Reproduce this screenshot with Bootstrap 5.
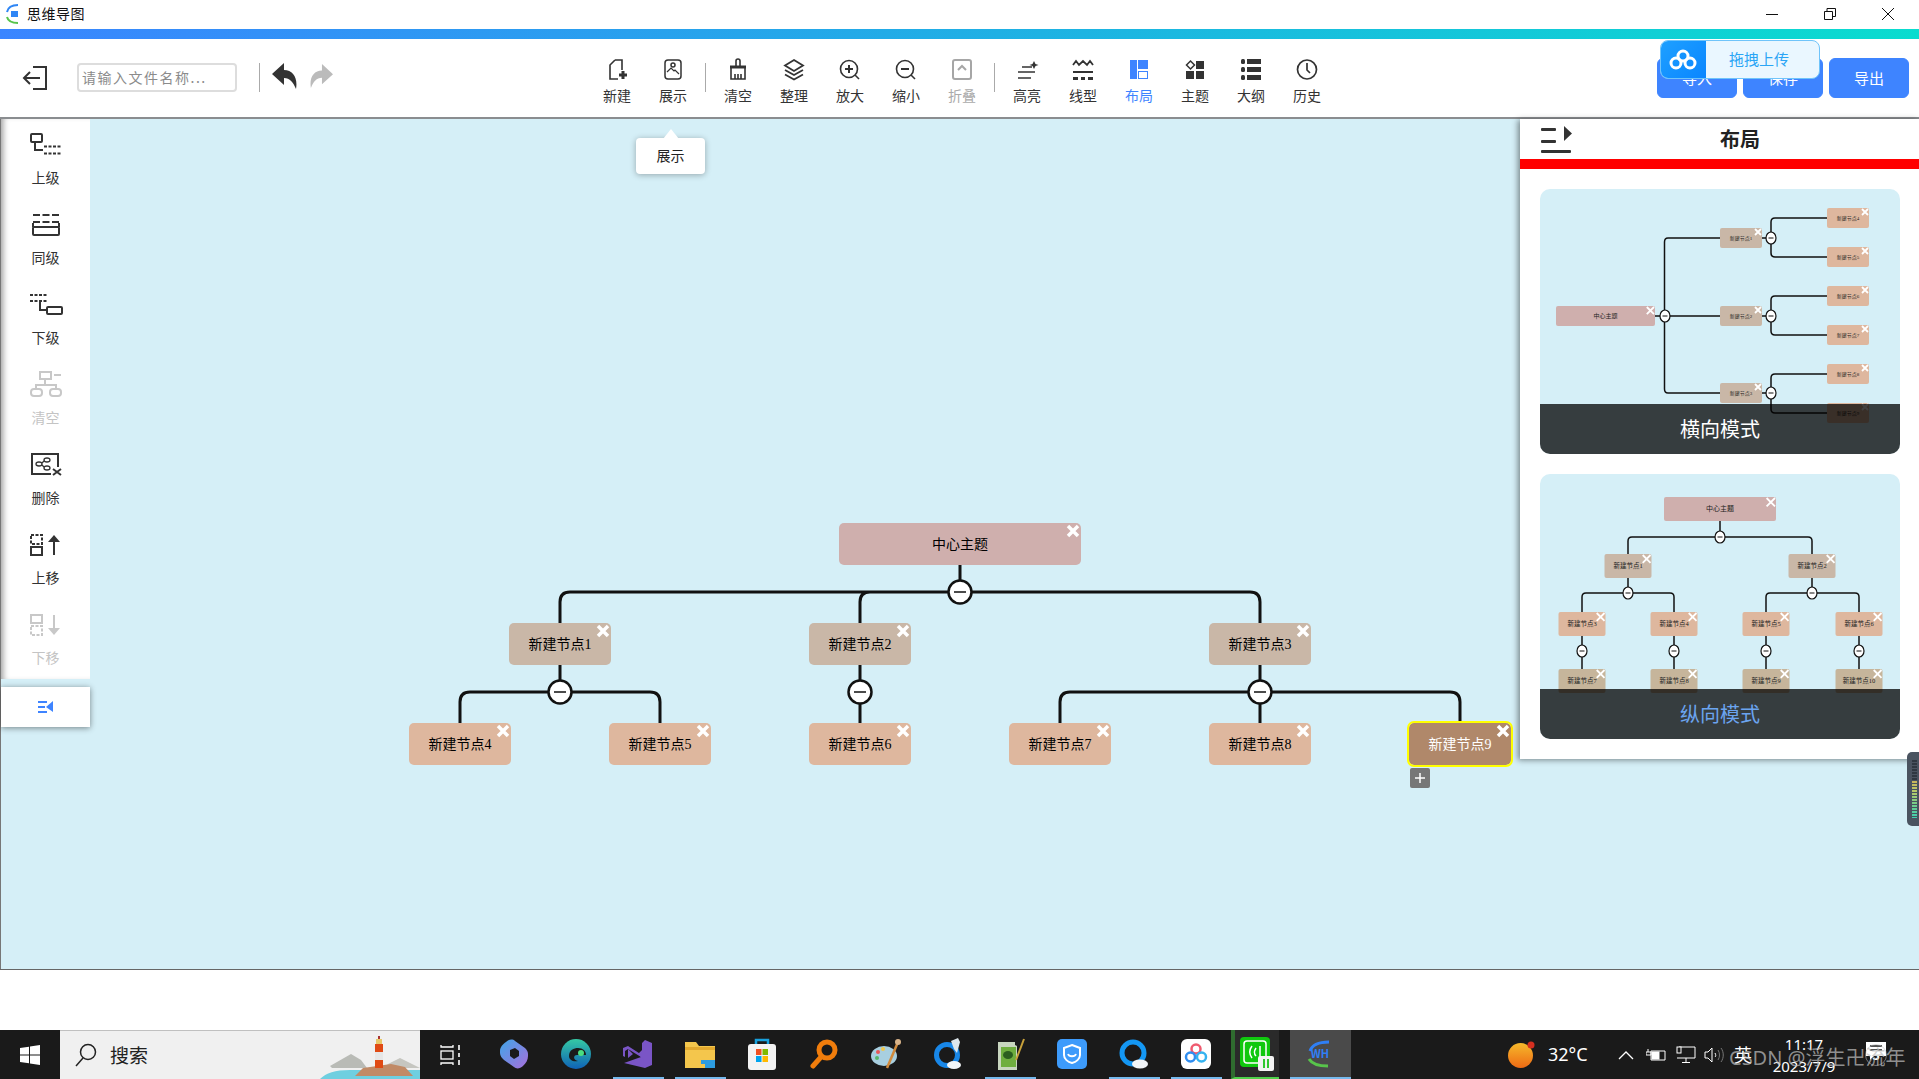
<!DOCTYPE html>
<html lang="zh">
<head>
    <meta charset="UTF-8">
    <meta name="viewport" content="width=device-width, initial-scale=1.0">
    <title>思维导图</title>
    <link href="https://cdn.jsdelivr.net/npm/bootstrap@5.3.0/dist/css/bootstrap.min.css" rel="stylesheet">
    <style>
        html, body { height: 100%; overflow: hidden; }
        body { background: #fff; font-family: "Noto Sans CJK SC", "Noto Sans", sans-serif; color: #333; font-size: 14px; }
        .app-shell { width: 1919px; height: 1079px; }

        /* window title */
        .win-title { height: 29px; padding-bottom: 2px; }
        .win-title .app-name { font-size: 14px; color: #111; margin-left: 3px; letter-spacing: .5px; }
        .win-btn { width: 58px; height: 27px; }
        .win-ctrls { padding-right: 2px; }
        .grad-bar { height: 10px; background: linear-gradient(90deg, #3a85ff, #1fb0e4 52%, #0adccf); }

        /* toolbar */
        .tool-bar { height: 80px; border-bottom: 2px solid #8a8d90; position: relative; }
        .exit-ico { margin: 27px 0 0 22px; }
        .name-input { width: 160px; height: 29px; margin: 24px 0 0 30px; border: 2px solid #ddd; border-radius: 4px; padding: 0 3px 2px; font-size: 14px; letter-spacing: 1.500px; outline: 0; }
        .name-input::placeholder { color: #8b8b8b; }
        .bar-sep { width: 1px; height: 29px; background: #aaa; margin-top: 24px; }
        .sep-a { margin-left: 22px; margin-right: 12px; }
        .sep-b { margin-left: 4px; margin-right: 4px; }
        .undo-ico { margin-top: 24px; }
        .redo-ico { margin: 24px 0 0 13px; }
        .tools-start { margin-left: 256px; }
        .tool-item { width: 56px; padding-top: 18px; color: #333; }
        .tool-item svg { display: block; }
        .tool-item span { line-height: 20px; margin-top: 4px; }
        .tool-off { color: #aaa; }
        .tool-on { color: #3e84ff; }
        .act-btns { margin: 19px 10px 0 auto; gap: 6px; }
        .act-btn { width: 80px; height: 40px; padding: 0; background: #3e84ff; border-color: #3e84ff; border-radius: 6px; font-size: 15px; color: #fff; }
        .drop-float { position: absolute; top: 1px; left: 1660px; width: 160px; height: 39px; border: 1px solid #6fc4fa; border-radius: 8px; overflow: hidden; background: #eaf7ff; }
        .drop-logo { width: 45px; background: linear-gradient(135deg, #1ea0ff, #0a86ff); padding-right: 2px; }
        .drop-text { color: #2aa5f5; font-size: 15px; padding-right: 7px; }
        .tip-box { position: absolute; left: 636px; top: 19px; width: 69px; height: 36px; background: #fff; border-radius: 4px; box-shadow: 0 1px 6px rgba(0,0,0,.3); z-index: 5; font-size: 14px; color: #222; padding-bottom: 2px; }
        .tip-box::before { content: ""; position: absolute; left: 27px; top: -9px; border: 8px solid transparent; border-top: 0; border-bottom: 10px solid #fff; }

        /* stage */
        .stage { height: 851px; position: relative; background: #d5eff7; border-bottom: 1px solid #666; }
        .left-col { width: 90px; position: relative; z-index: 3; border-left: 1px solid #777; }
        .left-pane { height: 560px; background: #fff; box-shadow: inset 6px 0 6px -4px #999; }
        .side-item { height: 80px; padding-top: 10px; color: #333; }
        .side-item svg { display: block; }
        .side-item span { line-height: 20px; margin-top: 8px; }
        .side-off { color: #c4c4c4; }
        .side-toggle { height: 40px; margin-top: 8px; background: #fff; box-shadow: 0 1px 6px rgba(0,0,0,.45); }
        .map-lines { position: absolute; left: 90px; top: 0; width: 1829px; height: 851px; }
        .map-node { position: absolute; width: 102px; height: 42px; border-radius: 5px; color: #000; font-size: 14px; font-family: "Liberation Serif", "Noto Sans CJK SC", serif; }
        .map-node.root { width: 242px; background: #cfafad; }
        .map-node.lv1 { background: #c9b7a7; }
        .map-node.lv2 { background: #deb79e; }
        .map-node.sel { background: #b0886a; color: #fff; outline: 2px solid #ff0; outline-offset: 0; }
        .node-x { position: absolute; right: 1px; top: 1px; }
        .add-btn { position: absolute; left: 1410px; top: 649px; width: 20px; height: 20px; background: #777; border-radius: 2px; }

        /* right panel */
        .right-pane { position: absolute; right: 0; top: 0; width: 399px; height: 640px; background: #fff; box-shadow: -2px 1px 6px rgba(0,0,0,.45); z-index: 4; }
        .pane-head { height: 40px; padding-left: 21px; }
        .pane-title { font-size: 20px; font-weight: 700; color: #222; padding-right: 11px; }
        .red-bar { height: 10px; background: #f00; }
        .mode-list { padding: 20px 19px 0 20px; gap: 20px; }
        .mode-card { height: 265px; border-radius: 10px; overflow: hidden; background: #d5eff7; position: relative; }
        .mode-card svg { display: block; font-family: "Liberation Serif", "Noto Sans CJK SC", serif; }
        .mode-cap { position: absolute; left: 0; right: 0; bottom: 0; height: 50px; background: rgba(0,0,0,.745); color: #fff; font-size: 20px; }
        .mode-cap.picked { color: #6ba4ef; }
        .edge-handle { position: absolute; right: 0; top: 633px; width: 12px; height: 74px; background: #4a5360; border-radius: 5px 0 0 5px; z-index: 6; padding: 8px 2px 0 5px; }
        .edge-handle i { display: block; height: 58px; background: repeating-linear-gradient(transparent 0 2px, #4a5360 2px 3px), linear-gradient(#2f3741 0 35%, #c9b45a 36%, #b6c96a 55%, #6fce8e 78%, #3fd0b0 100%); }

        /* taskbar */
        .page-gap { height: 60px; }
        .task-bar { height: 49px; background: #1a1a1a; position: relative; color: #fff; }
        .defs-holder { position: absolute; width: 0; height: 0; }
        .start-btn { width: 60px; }
        .search-box { width: 360px; background: #f0f0f0; border-top: 1px solid #c0c0c0; color: #222; position: relative; overflow: hidden; padding-left: 15px; }
        .search-box span { font-size: 19px; margin-left: 13px; }
        .search-art { position: absolute; right: 0; bottom: 0; }
        .taskview { width: 63px; padding-left: 20px; }
        .task-slot { width: 62px; }
        .slot-in { width: 51px; height: 49px; border-bottom: 2px solid transparent; }
        .slot-in.run { border-bottom-color: #76b9ed; }
        .slot-in.grn { width: 48px; background: #2a2a2a; border-left: 4px solid #2f6b2f; border-bottom-color: #4fd04a; margin-left: -6px; }
        .slot-in.cur { width: 61px; background: #4a4a4a; border-bottom-color: #76b9ed; }
        .tray-sun { margin-left: 157px; }
        .tray-temp { font-family: "Noto Sans", sans-serif; font-size: 18px; margin-left: 13px; width: 39px; white-space: nowrap; }
        .tray-a { margin-left: 31px; }
        .tray-b { margin-left: 12px; }
        .tray-c { margin-left: 10px; }
        .tray-d { margin-left: 8px; }
        .tray-lang { margin-left: 10px; width: 20px; font-size: 18px; }
        .tray-clock { width: 70px; margin-left: 15px; font-family: "Noto Sans", sans-serif; font-size: 15px; line-height: 22px; }
        .tray-note { margin-left: 27px; position: relative; padding-bottom: 8px; }
        .note-num { position: absolute; left: -1px; top: 14px; width: 22px; height: 22px; border: 1px solid rgba(190,190,190,.55); border-radius: 50%; font-size: 13px; font-weight: 700; line-height: 20px; text-align: center; }
        .mark-text { position: absolute; left: 1729px; top: 15px; font-size: 20px; color: rgba(190,190,190,.72); white-space: nowrap; line-height: 26px; font-family: "Noto Sans", "Noto Sans CJK SC", sans-serif; }
    </style>
</head>
<body>
<div class="app-shell d-flex flex-column">

    <div class="win-title d-flex align-items-center">
        <svg width="20" height="22" viewBox="0 0 20 22" class="ms-1">
            <path d="M3 9C4 4 8 2 14 2" fill="none" stroke="#2f86f5" stroke-width="2"/>
            <path d="M3 14c1 4 5 6 11 6" fill="none" stroke="#58c44b" stroke-width="2"/>
            <rect x="7" y="8" width="7" height="6" fill="#2f86f5"/>
        </svg>
        <span class="app-name">思维导图</span>
        <div class="win-ctrls d-flex ms-auto">
            <div class="win-btn d-flex align-items-center justify-content-center">
                <svg width="12" height="12"><path d="M0 6.5h12" stroke="#111"/></svg>
            </div>
            <div class="win-btn d-flex align-items-center justify-content-center">
                <svg width="12" height="12"><path d="M.5 3.5h8v8h-8zM3 3V.5h8.500v8H9" fill="none" stroke="#111"/></svg>
            </div>
            <div class="win-btn d-flex align-items-center justify-content-center">
                <svg width="12" height="12"><path d="M0 0l12 12M12 0L0 12" stroke="#111"/></svg>
            </div>
        </div>
    </div>
    <div class="grad-bar"></div>

    <div class="tool-bar d-flex align-items-start">
        <svg class="exit-ico" width="25" height="24" viewBox="0 0 25 24" fill="none" stroke="#333" stroke-width="2">
            <path d="M11 1h13v22H11M18 12H2M8 6l-6 6 6 6"/>
        </svg>
        <input class="name-input" type="text" placeholder="请输入文件名称...">
        <div class="bar-sep sep-a"></div>
        <svg class="undo-ico" width="25" height="26" viewBox="0 0 25 26"><path d="M0 11L12 0v7c9 0 14 8 12 19-3-7-6-11-12-11v7z" fill="#333"/></svg>
        <svg class="redo-ico" width="23" height="26" viewBox="0 0 25 26"><path d="M25 11L13 0v7C4 7-1 15 1 26c3-7 6-11 12-11v7z" fill="#bbb"/></svg>

        <div class="tools-start d-flex align-items-start">
            <div class="tool-item d-flex flex-column align-items-center">
                <svg width="24" height="24" viewBox="0 0 24 24" fill="none" stroke="#333" stroke-width="1.600"><path d="M10 3h7v10M10 3L5 8v14h8"/><path d="M18 14v8M14 18h8" stroke-width="3"/></svg>
                <span>新建</span>
            </div>
            <div class="tool-item d-flex flex-column align-items-center">
                <svg width="24" height="24" viewBox="0 0 24 24" fill="none" stroke="#333" stroke-width="1.500"><rect x="4" y="3" width="16" height="19" rx="3"/><circle cx="12" cy="8" r="2"/><path d="M6 15l4-4 3 3 1-1 4 4" stroke-width="1.200"/></svg>
                <span>展示</span>
            </div>
            <div class="bar-sep sep-b"></div>
            <div class="tool-item d-flex flex-column align-items-center">
                <svg width="24" height="24" viewBox="0 0 24 24" fill="none" stroke="#333" stroke-width="1.600"><path d="M10 9V4a2 2 0 0 1 4 0v5"/><path d="M4 10h16" stroke-width="3"/><path d="M5 11v11h14V11M9 17v5M12 17v5M15 17v5"/></svg>
                <span>清空</span>
            </div>
            <div class="tool-item d-flex flex-column align-items-center">
                <svg width="24" height="24" viewBox="0 0 24 24" fill="none" stroke="#333" stroke-width="1.800"><path d="M12 3l9 5.500-9 5.500-9-5.500z"/><path d="M3 13l9 5 9-5M3 17.500l9 5 9-5"/></svg>
                <span>整理</span>
            </div>
            <div class="tool-item d-flex flex-column align-items-center">
                <svg width="24" height="24" viewBox="0 0 24 24" fill="none" stroke="#333" stroke-width="1.600"><circle cx="11" cy="12" r="8.500"/><path d="M17 18l4 4"/><path d="M7 12h8M11 8v8" stroke-width="2"/></svg>
                <span>放大</span>
            </div>
            <div class="tool-item d-flex flex-column align-items-center">
                <svg width="24" height="24" viewBox="0 0 24 24" fill="none" stroke="#333" stroke-width="1.600"><circle cx="11" cy="12" r="8.500"/><path d="M17 18l4 4"/><path d="M7 12h8" stroke-width="2"/></svg>
                <span>缩小</span>
            </div>
            <div class="tool-item tool-off d-flex flex-column align-items-center">
                <svg width="24" height="24" viewBox="0 0 24 24" fill="none" stroke="#a6a6a6" stroke-width="2"><rect x="3" y="3" width="18" height="19" rx="2"/><path d="M8 13l4-4 4 4"/></svg>
                <span>折叠</span>
            </div>
            <div class="bar-sep sep-b"></div>
            <div class="tool-item d-flex flex-column align-items-center">
                <svg width="24" height="24" viewBox="0 0 24 24" fill="none" stroke="#333" stroke-width="1.300"><path d="M7 10h10M3 15h17M3 21h13"/><path d="M19 4l1.500 3 3 1-3 1-1.500 3-1.500-3-3-1 3-1z" fill="#333" stroke="none"/></svg>
                <span>高亮</span>
            </div>
            <div class="tool-item d-flex flex-column align-items-center">
                <svg width="24" height="24" viewBox="0 0 24 24" fill="none" stroke="#333"><path d="M2 8l3-4 3 4 4-4 4 4 3-4 3 4" stroke-width="1.800"/><path d="M2 15h20" stroke-width="2"/><path d="M2 21.500h5M10 21.500h4M17 21.500h5" stroke-width="3"/></svg>
                <span>线型</span>
            </div>
            <div class="tool-item tool-on d-flex flex-column align-items-center">
                <svg width="24" height="24" viewBox="0 0 24 24"><rect x="3" y="3" width="7" height="19" fill="#3e84ff"/><rect x="11" y="3" width="10" height="9" fill="#3e84ff"/><rect x="11.500" y="14.500" width="9" height="7" fill="none" stroke="#3e84ff"/></svg>
                <span>布局</span>
            </div>
            <div class="tool-item d-flex flex-column align-items-center">
                <svg width="24" height="24" viewBox="0 0 24 24"><path d="M7.500 4l4 4-4 4-4-4z" fill="none" stroke="#333" stroke-width="1.500"/><rect x="13" y="4" width="8" height="8" fill="#333"/><rect x="3" y="14" width="8" height="8" fill="#333"/><rect x="13" y="14" width="8" height="8" fill="#333"/></svg>
                <span>主题</span>
            </div>
            <div class="tool-item d-flex flex-column align-items-center">
                <svg width="24" height="24" viewBox="0 0 24 24" fill="#333"><rect x="2" y="2" width="4" height="5" rx="1.500"/><rect x="8" y="2" width="14" height="5"/><rect x="2" y="10" width="4" height="5" rx="1.500"/><rect x="8" y="10" width="14" height="5"/><rect x="2" y="18" width="4" height="5" rx="1.500"/><rect x="8" y="18" width="14" height="5"/></svg>
                <span>大纲</span>
            </div>
            <div class="tool-item d-flex flex-column align-items-center">
                <svg width="24" height="24" viewBox="0 0 24 24" fill="none" stroke="#333" stroke-width="1.700"><circle cx="12" cy="12.500" r="9.500"/><path d="M12 6v7l3 3"/></svg>
                <span>历史</span>
            </div>
        </div>

        <div class="act-btns d-flex">
            <button class="btn act-btn">导入</button>
            <button class="btn act-btn">保存</button>
            <button class="btn act-btn">导出</button>
        </div>
        <div class="drop-float d-flex">
            <div class="drop-logo d-flex align-items-center justify-content-center">
                <svg width="28" height="24" viewBox="0 0 28 24" fill="none" stroke="#fff" stroke-width="3"><circle cx="14" cy="8" r="5"/><circle cx="7" cy="15" r="5"/><circle cx="21" cy="15" r="5"/></svg>
            </div>
            <div class="drop-text flex-grow-1 d-flex align-items-center justify-content-center">拖拽上传</div>
        </div>
    </div>

    <div class="stage d-flex">
        <div class="left-col">
            <div class="left-pane">
                <div class="side-item d-flex flex-column align-items-center">
                    <svg width="34" height="30" viewBox="0 0 34 30" fill="none" stroke="#333" stroke-width="2"><rect x="2" y="5" width="11" height="8" rx="1"/><path d="M6 13v8h8"/><path d="M15 17.500h18M15 24.500h18" stroke-dasharray="3 1.500"/></svg>
                    <span>上级</span>
                </div>
                <div class="side-item d-flex flex-column align-items-center">
                    <svg width="34" height="30" viewBox="0 0 34 30" fill="none" stroke="#333" stroke-width="2"><path d="M4 6h27M4 13h27" stroke-dasharray="7 2.500"/><rect x="4" y="18" width="26" height="8" rx="1"/><path d="M4 14v4M30 14v4"/></svg>
                    <span>同级</span>
                </div>
                <div class="side-item d-flex flex-column align-items-center">
                    <svg width="34" height="30" viewBox="0 0 34 30" fill="none" stroke="#333" stroke-width="2"><path d="M1 6h18M1 12h18" stroke-dasharray="3 1.500"/><path d="M11 13v8h7"/><rect x="18" y="18" width="15" height="7" rx="1"/></svg>
                    <span>下级</span>
                </div>
                <div class="side-item side-off d-flex flex-column align-items-center">
                    <svg width="34" height="30" viewBox="0 0 34 30" fill="none" stroke="#c8c8c8" stroke-width="2"><rect x="11" y="3" width="11" height="7"/><path d="M16 10v6M7 20v-4h20v4M25 6h7"/><rect x="2" y="20" width="11" height="7" rx="3"/><rect x="21" y="20" width="11" height="7" rx="3"/></svg>
                    <span>清空</span>
                </div>
                <div class="side-item d-flex flex-column align-items-center">
                    <svg width="34" height="30" viewBox="0 0 34 30" fill="none" stroke="#333" stroke-width="2"><path d="M22 25H3V5h26v13"/><g stroke-width="1.300"><ellipse cx="10" cy="15" rx="3" ry="2"/><ellipse cx="18" cy="11" rx="3" ry="2"/><ellipse cx="18" cy="19" rx="3" ry="2"/><path d="M13 14l2-2M13 16l2 2"/></g><path d="M24 20l8 6M32 20l-8 6"/></svg>
                    <span>删除</span>
                </div>
                <div class="side-item d-flex flex-column align-items-center">
                    <svg width="34" height="30" viewBox="0 0 34 30" fill="none" stroke="#333" stroke-width="2"><rect x="2" y="6" width="11" height="9" stroke-dasharray="3 1.500"/><rect x="2" y="18" width="11" height="8"/><path d="M25 26V8"/><path d="M25 6l-6 7h12z" fill="#333" stroke="none"/></svg>
                    <span>上移</span>
                </div>
                <div class="side-item side-off d-flex flex-column align-items-center">
                    <svg width="34" height="30" viewBox="0 0 34 30" fill="none" stroke="#c8c8c8" stroke-width="2"><rect x="2" y="6" width="11" height="8"/><rect x="2" y="17" width="11" height="9" stroke-dasharray="3 1.500"/><path d="M25 6v18"/><path d="M25 26l-6-7h12z" fill="#c8c8c8" stroke="none"/></svg>
                    <span>下移</span>
                </div>
            </div>
            <div class="side-toggle d-flex align-items-center justify-content-center">
                <svg width="16" height="14" viewBox="0 0 16 14" fill="none" stroke="#3e84ff" stroke-width="2"><path d="M0 2h9M0 7h7M0 12h9"/><path d="M15 1v11L8 7z" fill="#3e84ff" stroke="none"/></svg>
            </div>
        </div>

        <div id="mapArea">
            <svg class="map-lines" viewBox="90 119 1829 851" fill="none">
                <g stroke="#111" stroke-width="3">
                    <path d="M960 565V592M560 623V602Q560 592 570 592H1250Q1260 592 1260 602V623M860 623V602Q860 592 870 592"/>
                    <path d="M560 665V692M460 723V702Q460 692 470 692H650Q660 692 660 702V723"/>
                    <path d="M860 665V723M1260 665V723M1060 723V702Q1060 692 1070 692H1450Q1460 692 1460 702V723"/>
                </g>
                <g fill="#fff" stroke="#111" stroke-width="2.500">
                    <circle cx="960" cy="592" r="11.500"/>
                    <circle cx="560" cy="692" r="11.500"/>
                    <circle cx="860" cy="692" r="11.500"/>
                    <circle cx="1260" cy="692" r="11.500"/>
                </g>
                <path d="M954 592h12M554 692h12M854 692h12M1254 692h12" stroke="#111" stroke-width="1.500"/>
            </svg>
        </div>
        <div class="add-btn d-flex align-items-center justify-content-center">
            <svg width="12" height="12"><path d="M6 1v10M1 6h10" stroke="#fff" stroke-width="1.500"/></svg>
        </div>

        <div class="tip-box d-flex align-items-center justify-content-center">展示</div>

        <div class="right-pane d-flex flex-column">
            <div class="pane-head d-flex align-items-center">
                <svg width="31" height="28" viewBox="0 0 31 28" fill="#333"><rect x="0" y="3" width="15" height="3" rx="1"/><rect x="0" y="15" width="15" height="3" rx="1"/><rect x="0" y="25" width="30" height="3" rx="1"/><path d="M23 1v15l8-7.500z"/></svg>
                <div class="pane-title flex-grow-1 text-center">布局</div>
            </div>
            <div class="red-bar"></div>
            <div class="mode-list d-flex flex-column">
                <div class="mode-card">
                    <svg id="miniH" width="360" height="265" viewBox="0 0 360 265"></svg>
                    <div class="mode-cap d-flex align-items-center justify-content-center">横向模式</div>
                </div>
                <div class="mode-card">
                    <svg id="miniV" width="360" height="265" viewBox="0 0 360 265"></svg>
                    <div class="mode-cap picked d-flex align-items-center justify-content-center">纵向模式</div>
                </div>
            </div>
        </div>
        <div class="edge-handle"><i class="d-block"></i></div>
    </div>

    <div class="page-gap"></div>

    <div class="task-bar d-flex">
        <svg class="defs-holder">
            <defs>
                <linearGradient id="gCop" x1="0" y1="0" x2="1" y2="1"><stop offset="0" stop-color="#3fa6e8"/><stop offset="1" stop-color="#a86fdc"/></linearGradient>
                <linearGradient id="gEdge" x1="0" y1="0" x2="0" y2="1"><stop offset="0" stop-color="#35c9a4"/><stop offset="1" stop-color="#0f62b6"/></linearGradient>
                <linearGradient id="gSun" x1="0" y1="0" x2="0" y2="1"><stop offset="0" stop-color="#f6b92b"/><stop offset="1" stop-color="#ee6a14"/></linearGradient>
            </defs>
        </svg>
        <div class="start-btn d-flex align-items-center justify-content-center">
            <svg width="20" height="20" viewBox="0 0 20 20" fill="#fff"><path d="M0 3l9-1.300V9.500H0zM10 1.500L20 0v9.500H10zM0 10.500h9v7.800L0 17zM10 10.500h10V20l-10-1.500z"/></svg>
        </div>
        <div class="search-box d-flex align-items-center">
            <svg width="22" height="24" viewBox="0 0 22 24" fill="none" stroke="#222" stroke-width="1.500"><circle cx="13" cy="9" r="7.500"/><path d="M8 15L1 23"/></svg>
            <span>搜索</span>
            <svg class="search-art" width="100" height="43" viewBox="0 0 100 43">
                <path d="M0 43c6-6 15-9 30-9h70v9z" fill="#6fcfe0"/>
                <path d="M10 30l14-8 7-4 10 6 6 8H12z" fill="#b9bbb6"/>
                <path d="M68 28l12-6 12 6 8 4H64z" fill="#c6c6c0"/>
                <path d="M35 40l8-8 14-2 14-2 14 3 8 9z" fill="#c18a66"/>
                <rect x="55" y="8" width="8" height="24" fill="#e6e6e6"/>
                <rect x="55" y="8" width="8" height="8" fill="#e04a14"/>
                <rect x="55" y="24" width="8" height="8" fill="#e04a14"/>
                <rect x="56" y="3" width="6" height="5" fill="#e8c86a"/>
                <path d="M59 0v3" stroke="#a33" stroke-width="2"/>
            </svg>
        </div>
        <div class="taskview d-flex align-items-center">
            <svg width="20" height="20" viewBox="0 0 20 20" fill="none" stroke="#fff" stroke-width="1.300"><path d="M1 0v2h12V0M1 20v-2h12v2"/><rect x="1" y="6" width="12" height="8"/><path d="M19 0v5M19 8v4M19 15v5" stroke-width="1.600"/></svg>
        </div>

        <div class="task-slot d-flex justify-content-center">
            <div class="slot-in d-flex align-items-center justify-content-center">
                <svg width="28" height="30" viewBox="0 0 28 30"><path d="M6 3c3-3 7-3 9-1l10 7c2 2 3 4 3 6v2c0 4-2 7-5 10-3 3-7 3-9 1L4 21c-2-2-4-4-4-7v-2c0-4 3-7 6-9z" fill="url(#gCop)"/><path d="M10 11l5-2 4 3v5l-5 3-4-3z" fill="#1a1a1a"/></svg>
            </div>
        </div>
        <div class="task-slot d-flex justify-content-center">
            <div class="slot-in d-flex align-items-center justify-content-center">
                <svg width="30" height="30" viewBox="0 0 30 30"><circle cx="15" cy="15" r="15" fill="url(#gEdge)"/><path d="M8 17c0-6 5-8 9-8 5 0 8 3 8 7h-9c-4 0-4 5 1 6-5 1-9-1-9-5z" fill="#1a1a1a"/><circle cx="20" cy="14" r="3" fill="#4ade80"/></svg>
            </div>
        </div>
        <div class="task-slot d-flex justify-content-center">
            <div class="slot-in run d-flex align-items-center justify-content-center">
                <svg width="30" height="30" viewBox="0 0 30 30"><path d="M22 1l7 3v22l-7 3L1 24l17-6-13-8-3 2v6L0 17V9l5-2 14 9V4z" fill="#7a55c6"/><path d="M5 10l5 5-5 4zM21 9l-6 6 6 6z" fill="#7a55c6"/></svg>
            </div>
        </div>
        <div class="task-slot d-flex justify-content-center">
            <div class="slot-in run d-flex align-items-center justify-content-center">
                <svg width="30" height="28" viewBox="0 0 30 28"><path d="M0 2h11l3 4h16v22H0z" fill="#f4c64c"/><path d="M0 7h30v3H0z" fill="#e3a92e"/><path d="M16 20h14v8H20v-4h-4z" fill="#2d9ce0"/></svg>
            </div>
        </div>
        <div class="task-slot d-flex justify-content-center">
            <div class="slot-in d-flex align-items-center justify-content-center">
                <svg width="30" height="32" viewBox="0 0 30 32"><path d="M9 6V2h12v4" fill="none" stroke="#18a0dc" stroke-width="2.500"/><rect x="1" y="6" width="28" height="26" rx="3" fill="#f3f3f3"/><rect x="9" y="11" width="5.500" height="6" fill="#f05122"/><rect x="15.500" y="11" width="5.500" height="6" fill="#7fba00"/><rect x="9" y="18" width="5.500" height="6" fill="#00a4ef"/><rect x="15.500" y="18" width="5.500" height="6" fill="#ffb900"/></svg>
            </div>
        </div>
        <div class="task-slot d-flex justify-content-center">
            <div class="slot-in d-flex align-items-center justify-content-center">
                <svg width="28" height="30" viewBox="0 0 28 30" fill="none" stroke="#f07d0c"><circle cx="17" cy="11" r="8" stroke-width="5"/><path d="M11 18L3 27" stroke-width="5" stroke-linecap="round"/></svg>
            </div>
        </div>
        <div class="task-slot d-flex justify-content-center">
            <div class="slot-in d-flex align-items-center justify-content-center">
                <svg width="30" height="30" viewBox="0 0 30 30"><ellipse cx="13" cy="17" rx="13" ry="10" fill="#a8cfe0"/><circle cx="7" cy="13" r="2" fill="#e95757"/><circle cx="12" cy="10" r="2" fill="#f1c84c"/><circle cx="6" cy="19" r="2" fill="#55b96a"/><path d="M16 29L27 3" stroke="#d08a3c" stroke-width="2.500"/><circle cx="27" cy="3" r="3" fill="#d9b48a"/></svg>
            </div>
        </div>
        <div class="task-slot d-flex justify-content-center">
            <div class="slot-in d-flex align-items-center justify-content-center">
                <svg width="28" height="32" viewBox="0 0 28 32"><circle cx="13" cy="17" r="10.500" fill="none" stroke="#1887e8" stroke-width="5"/><ellipse cx="20" cy="27" rx="7" ry="4" fill="#f1f5f8"/><path d="M17 3l7-3 2 4-3 11-3-4z" fill="#dde6ec"/></svg>
            </div>
        </div>
        <div class="task-slot d-flex justify-content-center">
            <div class="slot-in run d-flex align-items-center justify-content-center">
                <svg width="30" height="32" viewBox="0 0 30 32"><path d="M3 4h17v3l2 1v24H3z" fill="#c8d6bf"/><rect x="6" y="9" width="15" height="20" fill="#6fae3f"/><ellipse cx="13" cy="17" rx="5" ry="4" fill="#2b5d1f"/><path d="M21 22L29 1" stroke="#c8a13a" stroke-width="2"/></svg>
            </div>
        </div>
        <div class="task-slot d-flex justify-content-center">
            <div class="slot-in d-flex align-items-center justify-content-center">
                <svg width="30" height="30" viewBox="0 0 30 30"><rect width="30" height="30" rx="5" fill="#3d9bfb"/><path d="M15 6l8 3v7c0 4-4 7-8 8-4-1-8-4-8-8V9z" fill="none" stroke="#fff" stroke-width="2"/><path d="M11 15c1 3 7 3 8 0" fill="none" stroke="#fff" stroke-width="1.800"/></svg>
            </div>
        </div>
        <div class="task-slot d-flex justify-content-center">
            <div class="slot-in run d-flex align-items-center justify-content-center">
                <svg width="30" height="30" viewBox="0 0 30 30"><circle cx="14" cy="14" r="11" fill="none" stroke="#1497f3" stroke-width="5"/><ellipse cx="21" cy="25" rx="8" ry="4.500" fill="#f1f5f8"/></svg>
            </div>
        </div>
        <div class="task-slot d-flex justify-content-center">
            <div class="slot-in run d-flex align-items-center justify-content-center">
                <svg width="30" height="30" viewBox="0 0 30 30" fill="none"><rect width="30" height="30" rx="6" fill="#fff"/><circle cx="15" cy="10" r="4.500" stroke="#ef5a6f" stroke-width="2.500"/><circle cx="9.500" cy="18" r="4.500" stroke="#2f8df0" stroke-width="2.500"/><circle cx="20.500" cy="18" r="4.500" stroke="#35b3f0" stroke-width="2.500"/></svg>
            </div>
        </div>
        <div class="task-slot d-flex justify-content-center">
            <div class="slot-in grn d-flex align-items-center justify-content-center">
                <svg width="34" height="34" viewBox="0 0 34 34" fill="none"><rect x="0" y="0" width="30" height="30" rx="4" fill="#10c80e"/><rect x="4" y="4" width="22" height="22" rx="3" stroke="#fff" stroke-width="1.500"/><path d="M12 9c-3 4-3 8 0 12M16 11c-2 3-2 6 0 8M20 9v12" stroke="#fff" stroke-width="1.500"/><rect x="18" y="19" width="16" height="15" rx="2" fill="#f4f4f4"/><path d="M24 22v9M28 22v9" stroke="#32c832" stroke-width="2"/></svg>
            </div>
        </div>
        <div class="task-slot d-flex justify-content-center">
            <div class="slot-in cur d-flex align-items-center justify-content-center">
                <svg width="30" height="30" viewBox="0 0 30 30"><path d="M5 12C7 6 13 3 24 3" fill="none" stroke="#2f7ff5" stroke-width="3"/><path d="M4 20c3 5 10 7 19 7" fill="none" stroke="#58c44b" stroke-width="3"/><text x="15" y="19" font-size="11" font-weight="700" fill="#2f7ff5" text-anchor="middle">WH</text></svg>
            </div>
        </div>

        <div class="tray-sun d-flex align-items-center">
            <svg width="27" height="27" viewBox="0 0 27 27"><circle cx="12.500" cy="14.500" r="12.500" fill="url(#gSun)"/><circle cx="23" cy="4" r="3.500" fill="#d42f20"/></svg>
        </div>
        <div class="tray-temp d-flex align-items-center">32°C</div>
        <div class="tray-a d-flex align-items-center">
            <svg width="16" height="10"><path d="M1 9l7-7 7 7" fill="none" stroke="#fff" stroke-width="1.300"/></svg>
        </div>
        <div class="tray-b d-flex align-items-center">
            <svg width="20" height="14" viewBox="0 0 20 14" fill="none" stroke="#fff"><path d="M5 3h14v9H5z"/><rect x="6" y="4" width="7" height="7" fill="#fff"/><path d="M2 1v3M0 4h5v3H0z"/></svg>
        </div>
        <div class="tray-c d-flex align-items-center">
            <svg width="20" height="17" viewBox="0 0 20 17" fill="none" stroke="#fff"><path d="M3 1h16v11H1M10 12v4M6 16.500h8"/><rect x="1" y="1" width="4" height="6" fill="#1a1a1a"/></svg>
        </div>
        <div class="tray-d d-flex align-items-center">
            <svg width="20" height="16" viewBox="0 0 20 16" fill="none" stroke="#fff"><path d="M1 5h3l4-4v14l-4-4H1z"/><path d="M11 6c1 2 1 3 0 4" /><path d="M14 3c2 3 2 7 0 10M17 1c3 4 3 10 0 14" stroke="#777"/></svg>
        </div>
        <div class="tray-lang d-flex align-items-center">英</div>
        <div class="tray-clock d-flex flex-column align-items-center justify-content-center">
            <div>11:17</div>
            <div>2023/7/9</div>
        </div>
        <div class="tray-note d-flex align-items-center">
            <svg width="20" height="18" viewBox="0 0 20 18"><path d="M0 0h20v14H8l-4 4v-4H0z" fill="#fff"/><path d="M4 4h12M4 8h12" stroke="#1a1a1a" stroke-width="1.300"/></svg>
            <span class="note-num">3</span>
        </div>
        <div class="mark-text">CSDN @浮生卍流年</div>
    </div>
</div>

<script>
    // 主画布节点
    const mapNodes = [
        { cx: 960, top: 523, text: "中心主题", cls: "root" },
        { cx: 560, top: 623, text: "新建节点1", cls: "lv1" },
        { cx: 860, top: 623, text: "新建节点2", cls: "lv1" },
        { cx: 1260, top: 623, text: "新建节点3", cls: "lv1" },
        { cx: 460, top: 723, text: "新建节点4", cls: "lv2" },
        { cx: 660, top: 723, text: "新建节点5", cls: "lv2" },
        { cx: 860, top: 723, text: "新建节点6", cls: "lv2" },
        { cx: 1060, top: 723, text: "新建节点7", cls: "lv2" },
        { cx: 1260, top: 723, text: "新建节点8", cls: "lv2" },
        { cx: 1460, top: 723, text: "新建节点9", cls: "lv2 sel" }
    ];
    const area = document.getElementById("mapArea");
    mapNodes.forEach(n => {
        const w = n.cls === "root" ? 242 : 102;
        const el = document.createElement("div");
        el.className = "map-node d-flex align-items-center justify-content-center " + n.cls;
        el.style.left = (n.cx - w / 2) + "px";
        el.style.top = (n.top - 119) + "px";
        el.innerHTML = `${n.text}<svg class="node-x" width="14" height="14"><path d="M2 2l10 10M12 2L2 12" stroke="#fff" stroke-width="3.500"/></svg>`;
        area.appendChild(el);
    });

    // 右侧缩略图
    function miniNode(x0, y0, x1, y1, color, text, fs) {
        const cx = (x0 + x1) / 2, cy = (y0 + y1) / 2 + fs * 0.35, m = fs * 0.6;
        return `<rect x="${x0}" y="${y0}" width="${x1 - x0}" height="${y1 - y0}" rx="2" fill="${color}"/>` +
            `<text x="${cx}" y="${cy}" font-size="${fs}" fill="#222" text-anchor="middle">${text}</text>` +
            `<path d="M${x1 - 1 - 2 * m} ${y0 + 1}l${2 * m} ${2 * m}m0 -${2 * m}l-${2 * m} ${2 * m}" stroke="#fff" stroke-width="1.800"/>`;
    }
    function miniDot(x, y) {
        return `<ellipse cx="${x}" cy="${y}" rx="5" ry="6" fill="#fff" stroke="#111" stroke-width="1.200"/>` +
            `<path d="M${x - 2.500} ${y}h5" stroke="#111"/>`;
    }
    function buildH() {
        const pink = "#cfafad", tan = "#c9b7a7", sand = "#deb79e";
        let lines = "M115 127H180M180 49H128Q124.500 49 124.500 53V200Q124.500 204 128 204H180";
        let dots = miniDot(125, 127), boxes = miniNode(16, 117, 115, 137, pink, "中心主题", 6);
        const groups = [[49, 29, 68, 1, 4, 5], [127, 107, 146, 2, 6, 7], [204, 185, 224, 3, 8, 9]];
        groups.forEach(g => {
            const [y, a, b, p, c1, c2] = g;
            lines += `M222 ${y}H231M287 ${a}H235Q231 ${a} 231 ${a + 4}V${b - 4}Q231 ${b} 235 ${b}H287`;
            dots += miniDot(231, y);
            boxes += miniNode(180, y - 10, 222, y + 10, tan, "新建节点" + p, 5);
            boxes += miniNode(287, a - 10, 329, a + 10, sand, "新建节点" + c1, 5);
            boxes += miniNode(287, b - 10, 329, b + 10, sand, "新建节点" + c2, 5);
        });
        document.getElementById("miniH").innerHTML =
            `<path d="${lines}" fill="none" stroke="#111" stroke-width="1.500"/>` + boxes + dots;
    }
    function buildV() {
        const pink = "#cfafad", tan = "#c9b7a7", sand = "#deb79e", low = "#c6b59b";
        let lines = "M180 47V63M88 80V67Q88 63 92 63H268Q272 63 272 67V80";
        let dots = miniDot(180, 63), boxes = miniNode(124, 23, 236, 47, pink, "中心主题", 7);
        let num = 3, low_num = 7;
        [[88, 42, 134, 1], [272, 226, 319, 2]].forEach(g => {
            const [x, a, b, p] = g;
            lines += `M${x} 104V119M${a} 138V123Q${a} 119 ${a + 4} 119H${b - 4}Q${b} 119 ${b} 123V138`;
            dots += miniDot(x, 119);
            boxes += miniNode(x - 23.500, 80, x + 23.500, 104, tan, "新建节点" + p, 6.500);
            [a, b].forEach(c => {
                lines += `M${c} 162V195`;
                dots += miniDot(c, 177);
                boxes += miniNode(c - 23.500, 138, c + 23.500, 162, sand, "新建节点" + num++, 6.500);
                boxes += miniNode(c - 23.500, 195, c + 23.500, 219, low, "新建节点" + low_num++, 6.500);
            });
        });
        document.getElementById("miniV").innerHTML =
            `<path d="${lines}" fill="none" stroke="#111" stroke-width="1.500"/>` + boxes + dots;
    }
    buildH();
    buildV();
</script>
<script src="https://cdn.jsdelivr.net/npm/bootstrap@5.3.0/dist/js/bootstrap.bundle.min.js"></script>
</body>
</html>
